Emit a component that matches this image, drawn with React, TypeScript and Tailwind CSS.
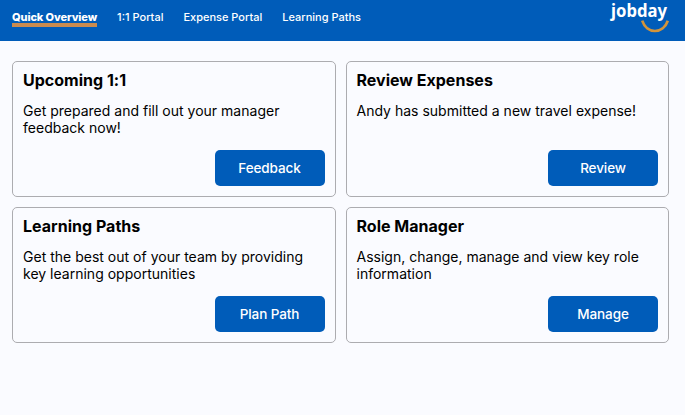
import React from "react";

const navItems = ["1:1 Portal", "Expense Portal", "Learning Paths"];

const cards = [
  { title: "Upcoming 1:1", body: "Get prepared and fill out your manager feedback now!", action: "Feedback" },
  { title: "Review Expenses", body: "Andy has submitted a new travel expense!", action: "Review" },
  { title: "Learning Paths", body: "Get the best out of your team by providing key learning opportunities", action: "Plan Path" },
  { title: "Role Manager", body: "Assign, change, manage and view key role information", action: "Manage" },
];

function Logo() {
  return (
    <svg className="h-[41px] w-[64px]" viewBox="0 0 64 41">
      <text x="4" y="17" fill="#fff" fontSize="17" fontWeight="700" textLength="56" lengthAdjust="spacingAndGlyphs" className="font-['Noto_Sans',sans-serif]">
        jobday
      </text>
      <path d="M35.2 20.7C39.6 34.4 56.2 34.4 60.8 20.7" fill="none" stroke="#d3943a" strokeWidth="2.7" />
    </svg>
  );
}

function Card({ title, body, action }: { title: string; body: string; action: string }) {
  return (
    <section className="flex h-[136px] flex-col rounded-[5px] border border-[#acacb0] px-[10px] pb-[10px] pt-[9px]">
      <h2 className="text-[16px] font-bold leading-[19px] tracking-[0.01px]">{title}</h2>
      <p className="mt-[12px] text-[14px] leading-[17px] tracking-[0.01px]">{body}</p>
      <button className="mt-auto h-9 w-[110px] self-end rounded-[5px] bg-[#005cb9] text-[13.5px] font-medium leading-[18px] tracking-[-0.1px] text-white">
        {action}
      </button>
    </section>
  );
}

export default function App() {
  return (
    <div className="min-h-screen bg-[#fafbff] font-['Inter',sans-serif] text-black">
      <header className="flex h-[41px] items-start justify-between bg-[#005cb9] pl-3 pr-[14px] text-white">
        <nav className="flex gap-5 pt-[10px] text-[11px] font-medium leading-[15px]">
          <a className="h-[17px] border-b-4 border-[#c98b50] font-extrabold tracking-[-0.1px]">Quick Overview</a>
          {navItems.map((item) => (
            <a key={item}>{item}</a>
          ))}
        </nav>
        <Logo />
      </header>
      <main className="grid grid-cols-2 gap-[10px] pl-3 pr-4 pt-5">
        {cards.map((card) => (
          <Card key={card.title} {...card} />
        ))}
      </main>
    </div>
  );
}
